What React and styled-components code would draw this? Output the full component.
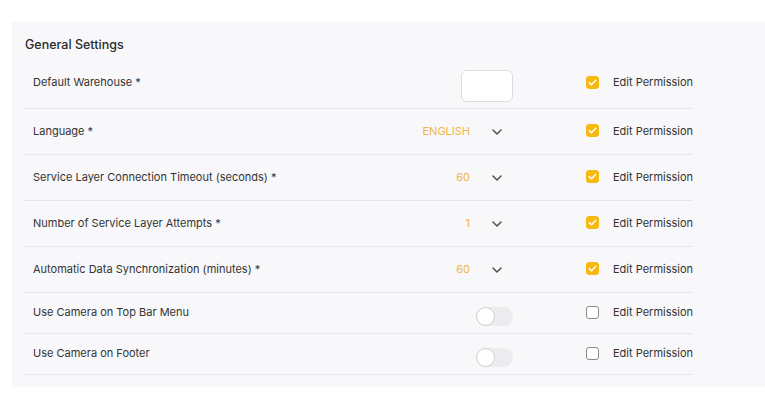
import React from "react";
import styled, { createGlobalStyle } from "styled-components";

const Global = createGlobalStyle`
  html, body { margin: 0; padding: 0; background: #ffffff; }
  body { font-family: Inter, "Noto Sans", sans-serif; }
`;

const Page = styled.div`
  padding: 22px 0 0 12px;
`;

const Panel = styled.section`
  background: #f8f8fa;
  padding: 15px 0 12px 12px;
  min-height: 349px;
  box-sizing: border-box;
`;

const Title = styled.h2`
  margin: 0 0 0 1px;
  font-size: 12.5px;
  font-weight: 500;
  color: #2b2b2b;
  line-height: 16px;
`;

const List = styled.div`
  width: 668px;
  margin-top: 8px;
`;

const Row = styled.div`
  display: flex;
  align-items: center;
  height: ${(p) => p.$h}px;
  padding-left: 9px;
  border-bottom: 1px solid #e7e7ea;
  box-sizing: border-box;
`;

const Label = styled.span`
  flex: 1;
  font-size: 11px;
  color: #333;
  margin-top: ${(p) => p.$offset ?? -2}px;
`;

const Control = styled.div`
  width: 120px;
  flex-shrink: 0;
  display: flex;
  align-items: center;
  justify-content: flex-end;
`;

const Value = styled.span`
  font-size: 11px;
  color: #f2b440;
  margin-top: -2px;
`;

const Chevron = styled.svg`
  width: 10px;
  height: 6px;
  margin: 0 11px 0 22px;
`;

const InputBox = styled.div`
  width: 50px;
  height: 30px;
  background: #fff;
  border: 1px solid #dcdcde;
  border-radius: 6px;
  margin-top: 3px;
`;

const Toggle = styled.div`
  width: 37px;
  height: 19px;
  border-radius: 10px;
  background: #ececee;
  position: relative;
  margin-top: 6px;
`;

const Knob = styled.div`
  position: absolute;
  left: 0;
  top: 0;
  width: 17px;
  height: 17px;
  border-radius: 50%;
  background: #fff;
  border: 1px solid #cfcfd2;
`;

const Perm = styled.label`
  display: flex;
  align-items: center;
  gap: 14px;
  margin-left: 73px;
  margin-top: ${(p) => p.$offset ?? -2}px;
  width: 106px;
  flex-shrink: 0;
  white-space: nowrap;
  font-size: 11px;
  color: #333;
`;

const Box = styled.span`
  width: 13px;
  height: 13px;
  flex-shrink: 0;
  box-sizing: border-box;
  border-radius: 3px;
  display: flex;
  align-items: center;
  justify-content: center;
  background: ${(p) => (p.$on ? "#f7b90f" : "#fff")};
  border: 1px solid ${(p) => (p.$on ? "#f7b90f" : "#8b8b8f")};
`;

const Check = () => (
  <svg width="9" height="7" viewBox="0 0 9 7">
    <path d="M1.2 3.6 L3.5 5.7 L7.8 1.3" fill="none" stroke="#fff" strokeWidth="1.5" strokeLinecap="round" strokeLinejoin="round" />
  </svg>
);

const Down = () => (
  <Chevron viewBox="0 0 10 6">
    <path d="M1 1 L5 5 L9 1" fill="none" stroke="#555" strokeWidth="1.6" strokeLinecap="round" strokeLinejoin="round" />
  </Chevron>
);

const rows = [
  { label: "Default Warehouse *", type: "input", h: 48, on: true, offset: -5 },
  { label: "Language *", type: "select", value: "ENGLISH", h: 46, on: true },
  { label: "Service Layer Connection Timeout (seconds) *", type: "select", value: "60", h: 46, on: true },
  { label: "Number of Service Layer Attempts *", type: "select", value: "1", h: 46, on: true },
  { label: "Automatic Data Synchronization (minutes) *", type: "select", value: "60", h: 46, on: true },
  { label: "Use Camera on Top Bar Menu", type: "toggle", h: 41, on: false },
  { label: "Use Camera on Footer", type: "toggle", h: 41, on: false },
];

export default function App() {
  return (
    <>
      <Global />
      <Page>
        <Panel>
          <Title>General Settings</Title>
          <List>
            {rows.map((r) => (
              <Row key={r.label} $h={r.h}>
                <Label $offset={r.offset}>{r.label}</Label>
                <Control>
                  {r.type === "input" && <InputBox />}
                  {r.type === "select" && (
                    <>
                      <Value>{r.value}</Value>
                      <Down />
                    </>
                  )}
                  {r.type === "toggle" && (
                    <Toggle>
                      <Knob />
                    </Toggle>
                  )}
                </Control>
                <Perm $offset={r.offset}>
                  <Box $on={r.on}>{r.on && <Check />}</Box>
                  Edit Permission
                </Perm>
              </Row>
            ))}
          </List>
        </Panel>
      </Page>
    </>
  );
}
